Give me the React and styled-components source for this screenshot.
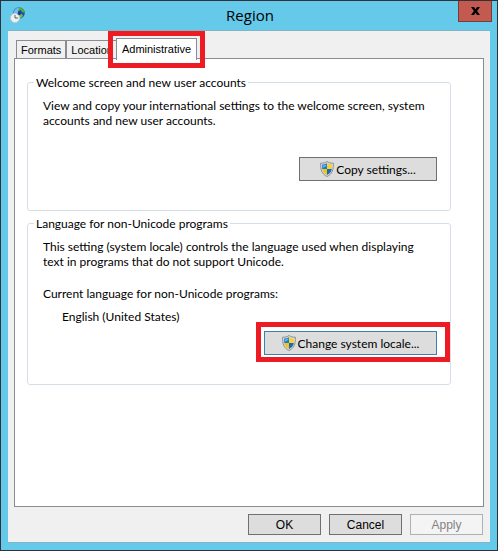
import React from "react";
import styled, { createGlobalStyle, css } from "styled-components";

const GlobalStyle = createGlobalStyle`
  * {
    box-sizing: border-box;
  }

  body {
    margin: 0;
    color: #000;
    font-family: Lato, "Open Sans", sans-serif;
    font-size: 12px;
    line-height: 15px;
  }
`;

const Shield = () => (
  <svg width="14" height="16" viewBox="0 0 14 16" aria-hidden="true">
    <path d="M7 0.5C5.3 1.8 3 2.3 0.6 2.2C0.4 8.5 1.6 13 7 15.5C12.4 13 13.6 8.5 13.4 2.2C11 2.3 8.7 1.8 7 0.5Z" fill="#d8dadb" stroke="#8b9092" />
    <path d="M7 2.2C5.6 3.1 3.9 3.5 2.2 3.6V8H7Z" fill="#1779d3" />
    <path d="M7 2.2C8.4 3.1 10.1 3.5 11.8 3.6V8H7Z" fill="#fbd12c" />
    <path d="M2.2 8H7V14C4.2 12.6 2.6 10.8 2.2 8Z" fill="#f5c316" />
    <path d="M11.8 8H7V14C9.8 12.6 11.4 10.8 11.8 8Z" fill="#1b68be" />
    <path d="M3 4.4C4.3 4.3 5.5 4 6.4 3.5V5L3 6.8Z" fill="#62b5f1" />
  </svg>
);

const GlobeClock = () => (
  <svg width="16" height="16" viewBox="0 0 16 16" aria-hidden="true">
    <circle cx="9" cy="6" r="5.8" fill="#1b55a8" />
    <path d="M4 4C6 0 10 0 11 1L9 3L9 6L6 7L3.4 7Z" fill="#70bfe9" />
    <path d="M9 1C12 0 14.6 3 14.6 6L12 5L11 3L8 4Z" fill="#58ae38" />
    <path d="M9 8L12 7L13 9L10 12L8 11Z" fill="#78bd3e" />
    <path d="M8 4L11 5L10 8L8 8Z" fill="#2536a0" />
    <circle cx="5" cy="11" r="4.5" fill="#edf1f3" stroke="#c3ccd2" />
    <path d="M5 8V11H8" fill="none" stroke="#53616b" />
  </svg>
);

const App = () => {
  return (
    <>
      <GlobalStyle />
      <Window>
        <TitleBar>
          <GlobeClock />
          <h1>Region</h1>
          <CloseButton type="button" aria-label="Close">
            <svg width="9" height="8" viewBox="0 0 9 8" aria-hidden="true">
              <path d="M0 0H3L4.5 2.2L6 0H9L6.1 4L9 8H6L4.5 5.8L3 8H0L2.9 4Z" fill="#000" />
            </svg>
          </CloseButton>
        </TitleBar>
        <Client>
          <Tabs role="tablist">
            <Tab type="button" role="tab" aria-selected="false">
              Formats
            </Tab>
            <Tab type="button" role="tab" aria-selected="false">
              Location
            </Tab>
            <Tab type="button" role="tab" aria-selected="true" $active>
              Administrative
            </Tab>
          </Tabs>
          <Panel role="tabpanel">
            <Group>
              <legend>Welcome screen and new user accounts</legend>
              <p>
                View and copy your international settings to the welcome screen, system accounts and new user accounts.
              </p>
              <Actions $gap="29px">
                <ShieldButton type="button">
                  <Shield />
                  Copy settings...
                </ShieldButton>
              </Actions>
            </Group>
            <Group>
              <legend>Language for non-Unicode programs</legend>
              <p>
                This setting (system locale) controls the language used when displaying text in programs that do not support Unicode.
              </p>
              <Label>Current language for non-Unicode programs:</Label>
              <Value>English (United States)</Value>
              <Actions $gap="7px">
                <Highlight>
                  <ShieldButton type="button" $wide>
                    <Shield />
                    Change system locale...
                  </ShieldButton>
                </Highlight>
              </Actions>
            </Group>
          </Panel>
          <Footer>
            <DialogButton type="button">OK</DialogButton>
            <DialogButton type="button">Cancel</DialogButton>
            <DialogButton type="button" disabled>
              Apply
            </DialogButton>
          </Footer>
        </Client>
      </Window>
    </>
  );
};

const Window = styled.main`
  display: flex;
  flex-direction: column;
  min-height: 100vh;
  padding: 0 7px 7px;
  border: 1px solid #352f39;
  background: #65c9e9;
`;

const TitleBar = styled.header`
  display: grid;
  grid-template-columns: 34px 1fr 34px;
  height: 29px;
  margin-right: -2px;

  > svg {
    margin: 6px 0 0 2px;
  }

  h1 {
    margin: 0;
    font-family: "Open Sans", sans-serif;
    font-size: 15px;
    font-weight: 400;
    line-height: 29px;
    text-align: center;
  }
`;

const CloseButton = styled.button`
  display: flex;
  align-items: center;
  justify-content: center;
  height: 21px;
  padding: 0;
  border: 1px solid #743c3c;
  border-top: 0;
  background: #c35a50;
`;

const Client = styled.div`
  display: flex;
  flex: 1;
  flex-direction: column;
  padding: 7px 6px;
  border-top: 1px solid #84b3c5;
  border-bottom: 1px solid #84b3c5;
  background: #f0f0f0;
`;

const Tabs = styled.div`
  display: flex;
  align-items: flex-end;
  height: 20px;
  padding-left: 2px;
`;

const redFrame = css`
  content: "";
  position: absolute;
  border: 5px solid #ed1c24;
  pointer-events: none;
`;

const Tab = styled.button`
  height: 18px;
  padding: 0 4px;
  border: 1px solid #898c95;
  border-bottom: 0;
  background: #f0f0f0;
  color: #000;
  font-family: "Liberation Sans", Arial, sans-serif;
  font-size: 11px;
  line-height: 18px;
  white-space: nowrap;

  ${({ $active }) =>
    $active &&
    css`
      position: relative;
      z-index: 1;
      height: 22px;
      margin: 0 0 -2px -2px;
      padding: 0 5px 2px;
      background: #fff;

      &::after {
        ${redFrame}
        inset: -8px -9px;
      }
    `}
`;

const Panel = styled.div`
  display: flex;
  flex: 1;
  flex-direction: column;
  gap: 5px;
  padding: 16px 32px 16px 12px;
  border: 1px solid #898c95;
  background: #fff;
`;

const Group = styled.fieldset`
  min-width: 0;
  margin: 0;
  padding: 8px 13px 29px 15px;
  border: 1px solid #d5dfe5;
  border-radius: 3px;

  legend {
    margin-left: -9px;
    padding: 0 2px;
    line-height: 15px;
  }

  p {
    margin: 0;
  }
`;

const Label = styled.div`
  margin-top: 17px;
`;

const Value = styled.div`
  margin-top: 8px;
  padding-left: 19px;
`;

const Actions = styled.div`
  display: flex;
  justify-content: flex-end;
  margin-top: ${({ $gap }) => $gap};
`;

const Highlight = styled.div`
  position: relative;

  &::after {
    ${redFrame}
    inset: -9px -13px -7px -8px;
  }
`;

const ShieldButton = styled.button`
  display: flex;
  align-items: center;
  justify-content: center;
  gap: 2px;
  width: ${({ $wide }) => ($wide ? "173px" : "138px")};
  height: 24px;
  padding: 0;
  border: 1px solid ${({ $wide }) => ($wide ? "#3c7fb1" : "#707070")};
  background: #ddd;
  color: #000;
  font: inherit;
  white-space: nowrap;
`;

const Footer = styled.footer`
  display: flex;
  justify-content: flex-end;
  gap: 8px;
  padding: 7px 1px 0 0;
`;

const DialogButton = styled.button`
  width: 73px;
  height: 21px;
  padding: 0;
  border: 1px solid #707070;
  background: #ddd;
  color: #000;
  font-family: "Liberation Sans", Arial, sans-serif;
  font-size: 12px;

  &:disabled {
    border-color: #adb2b5;
    background: #f4f4f4;
    color: #838383;
  }
`;

export default App;
